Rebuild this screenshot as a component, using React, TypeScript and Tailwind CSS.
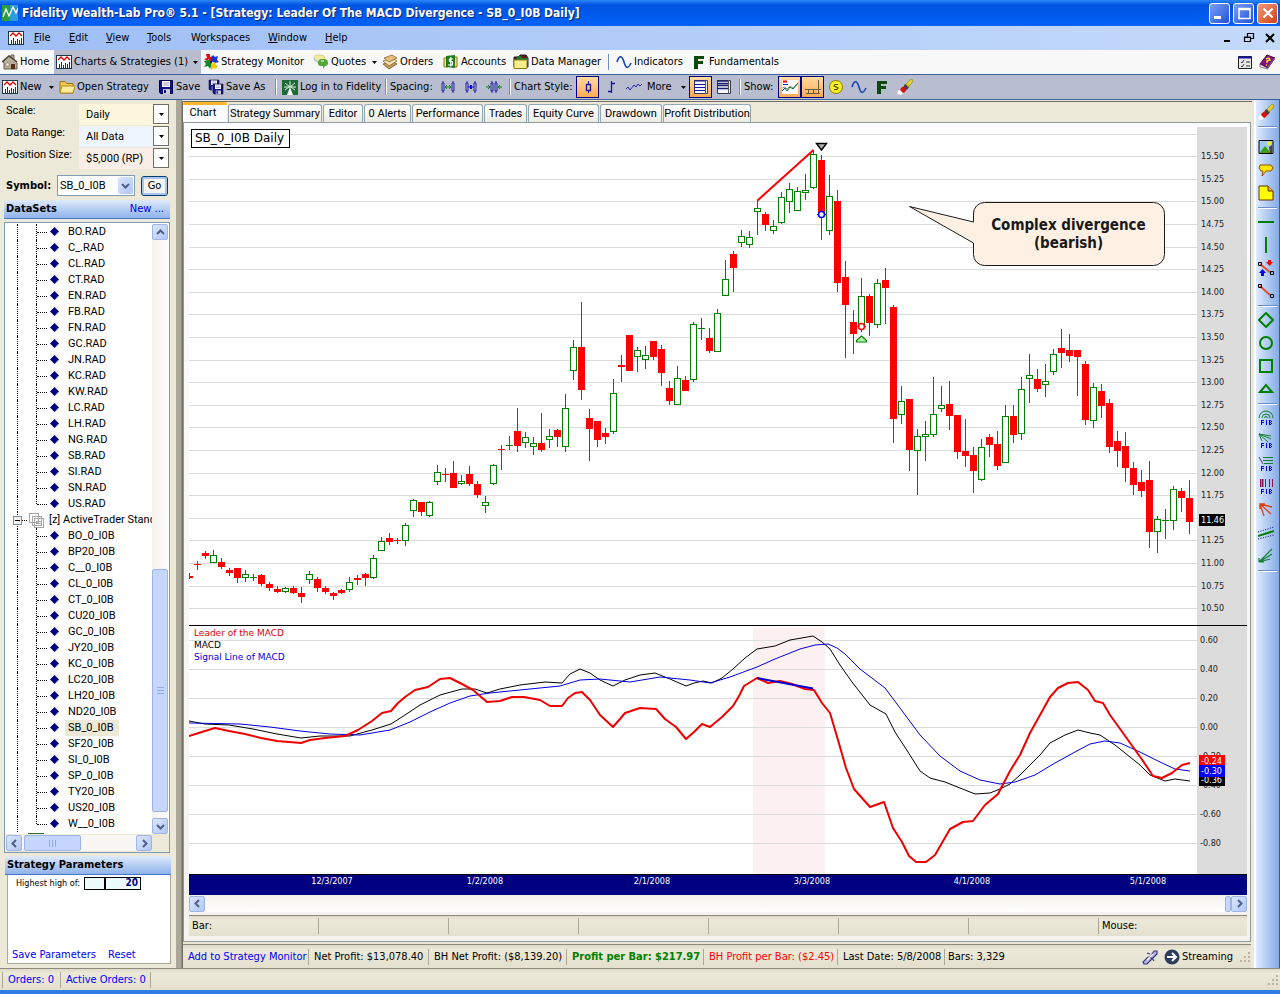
import type { ReactNode } from "react";

type Candle = [up: 0 | 1, high: number, top: number, bottom: number, low: number];

const FIRST_X = 189;
const STEP = 8;

const candles: Candle[] = [
  [0, 573, 576, 578, 579], [0, 561, 564, 565, 570], [0, 551, 553, 556, 559], [1, 550, 555, 563, 563],
  [0, 558, 562, 567, 569], [0, 568, 570, 573, 576], [0, 568, 568, 578, 583], [1, 570, 574, 578, 582],
  [1, 574, 577, 578, 581], [0, 574, 575, 584, 586], [0, 582, 584, 588, 591], [0, 586, 589, 592, 593],
  [1, 587, 588, 592, 593], [0, 586, 588, 593, 594], [0, 587, 593, 597, 603], [1, 571, 574, 580, 584],
  [0, 577, 579, 588, 592], [0, 586, 588, 592, 594], [0, 592, 593, 596, 600], [0, 589, 590, 593, 594],
  [1, 577, 582, 590, 592], [0, 575, 578, 580, 585], [0, 573, 574, 578, 586], [1, 555, 558, 578, 579],
  [1, 537, 541, 551, 551], [0, 533, 538, 542, 545], [0, 538, 540, 541, 544], [1, 523, 525, 541, 546],
  [1, 499, 500, 511, 517], [0, 502, 502, 512, 516], [1, 501, 502, 516, 517], [1, 465, 472, 482, 485],
  [0, 468, 474, 475, 482], [0, 461, 473, 488, 488], [1, 475, 481, 484, 485], [0, 466, 474, 484, 486],
  [0, 481, 484, 495, 498], [1, 496, 502, 506, 513], [1, 464, 465, 484, 485], [0, 445, 449, 450, 470],
  [1, 436, 445, 446, 450], [0, 408, 431, 446, 452], [1, 432, 437, 443, 448], [1, 437, 443, 447, 455],
  [0, 413, 443, 450, 452], [1, 429, 436, 440, 448], [0, 429, 430, 437, 447], [1, 394, 408, 447, 452],
  [1, 340, 347, 371, 380], [0, 302, 347, 390, 400], [0, 409, 418, 429, 461], [0, 421, 421, 440, 447],
  [0, 428, 433, 437, 444], [1, 379, 393, 432, 434], [0, 355, 365, 367, 382], [0, 335, 335, 371, 371],
  [1, 347, 350, 357, 372], [1, 346, 355, 360, 369], [0, 341, 341, 357, 360], [0, 345, 349, 373, 386],
  [0, 381, 388, 401, 405], [1, 366, 378, 405, 405], [0, 376, 380, 391, 391], [1, 322, 324, 380, 382],
  [1, 318, 328, 329, 340], [0, 328, 338, 351, 353], [1, 309, 313, 352, 352], [1, 260, 279, 296, 296],
  [0, 251, 254, 268, 292], [1, 230, 236, 243, 247], [1, 231, 237, 245, 248], [1, 200, 208, 212, 235],
  [0, 212, 214, 225, 231], [1, 220, 226, 231, 234], [1, 192, 197, 223, 224], [1, 183, 189, 202, 213],
  [1, 187, 191, 211, 211], [1, 174, 190, 193, 200], [1, 150, 154, 188, 189], [0, 155, 160, 213, 240],
  [1, 175, 196, 231, 235], [0, 190, 201, 283, 292], [0, 261, 277, 305, 358], [0, 310, 322, 334, 354],
  [1, 278, 296, 325, 332], [0, 294, 296, 323, 336], [1, 279, 283, 325, 328], [0, 268, 280, 288, 324],
  [0, 305, 307, 419, 443], [1, 386, 401, 415, 424], [0, 399, 399, 450, 471], [1, 429, 436, 451, 495],
  [1, 421, 434, 437, 461], [1, 377, 414, 435, 437], [1, 386, 405, 409, 412], [0, 381, 404, 416, 430],
  [0, 415, 415, 452, 459], [0, 419, 451, 456, 467], [0, 447, 455, 471, 493], [1, 439, 447, 480, 481],
  [0, 434, 437, 445, 457], [0, 431, 444, 466, 470], [1, 405, 416, 463, 463], [0, 405, 416, 435, 443],
  [1, 377, 389, 434, 440], [1, 354, 375, 379, 403], [0, 369, 379, 389, 392], [1, 364, 381, 385, 397],
  [1, 349, 354, 372, 375], [0, 329, 348, 353, 368], [0, 334, 350, 356, 362], [0, 350, 350, 357, 396],
  [0, 361, 364, 420, 425], [1, 383, 387, 421, 428], [0, 384, 391, 406, 418], [0, 399, 403, 447, 453],
  [0, 431, 441, 451, 467], [0, 432, 446, 468, 482], [0, 462, 468, 485, 495], [0, 470, 482, 491, 497],
  [0, 461, 480, 532, 548], [1, 516, 519, 532, 553], [1, 509, 520, 521, 539], [1, 486, 489, 521, 530],
  [0, 488, 491, 498, 512], [0, 480, 498, 522, 534],
];

const leaderLine =
  "189,736 205,731 215,728 229,731 245,734 261,738 277,741 301,743 310,740 325,738 345,736 358,730 372,721 382,713 391,711 398,703 405,697 415,690 428,687 440,679 450,678 462,684 473,690 487,702 500,701 512,697 524,697 540,700 550,706 562,706 568,698 575,693 582,692 590,700 600,715 613,727 620,719 625,713 640,708 656,709 665,719 676,727 686,739 694,732 702,724 710,727 722,717 733,706 739,696 744,686 757,678 768,683 780,681 792,684 805,689 814,690 822,703 830,713 838,740 846,768 854,789 870,807 884,802 893,828 902,842 909,856 916,862 926,862 935,855 950,829 963,822 973,821 985,805 998,794 1010,771 1020,755 1030,733 1040,715 1050,697 1058,688 1068,683 1078,682 1088,690 1095,701 1103,703 1110,715 1123,733 1133,747 1143,761 1153,776 1162,778 1172,773 1182,765 1190,763";
const macdLine =
  "189,721 205,724 229,725 253,729 277,734 301,738 320,736 350,736 372,730 391,724 405,715 420,705 440,695 462,689 475,689 487,693 500,689 520,685 545,682 562,683 570,674 580,669 590,673 600,680 613,686 625,680 640,675 655,673 670,679 686,686 694,683 703,681 712,683 722,678 733,669 745,658 757,649 775,646 790,640 813,636 822,642 830,649 840,665 852,682 870,705 886,714 895,732 908,752 920,771 930,778 945,782 960,788 975,794 990,793 1000,789 1010,784 1020,775 1040,755 1050,743 1065,735 1078,730 1090,733 1100,735 1115,745 1125,753 1140,765 1150,775 1165,781 1175,779 1190,781";
const signalLine =
  "189,723 240,724 270,727 300,731 330,734 360,735 390,730 410,722 430,712 450,703 470,696 490,693 520,690 560,686 580,680 600,679 630,682 660,677 690,680 710,683 730,677 757,667 775,659 800,649 815,645 828,644 837,648 845,654 860,669 885,688 900,708 920,735 940,756 960,771 980,780 1000,784 1015,782 1035,775 1055,763 1075,752 1090,744 1105,741 1120,743 1140,752 1160,762 1175,769 1190,771";

const priceRows = Array.from({ length: 22 }, (_, k) => ({
  y: Math.round(133.5 + 22.6 * k),
  label: (15.75 - 0.25 * k).toFixed(2),
}));
const macdRows = Array.from({ length: 8 }, (_, k) => ({
  y: 640 + 29 * k,
  label: (0.6 - 0.2 * k).toFixed(2).replace("-0.00", "0.00"),
}));
const dates: [number, string][] = [
  [332, "12/3/2007"], [485, "1/2/2008"], [652, "2/1/2008"], [812, "3/3/2008"], [972, "4/1/2008"], [1148, "5/1/2008"],
];

/* ---------- small drawings ---------- */

function Icon({ children, className = "size-4" }: { children: ReactNode; className?: string }) {
  return (
    <svg viewBox="0 0 16 16" className={`shrink-0 ${className}`} fill="none" aria-hidden="true">
      {children}
    </svg>
  );
}

const ChartIcon = () => (
  <Icon>
    <rect x=".5" y="1.5" width="15" height="13" fill="#fff" stroke="#1a3a4a" />
    <path d="M2 6l3-3 3 3 3-3 3 3" stroke="#e00000" strokeWidth="1.4" />
    <path d="M3.500 14V10M5.500 14V8M7.500 14v-3M9.500 14V9M11.500 14v-4M13.500 14V8" stroke="#0d3b4a" shapeRendering="crispEdges" />
  </Icon>
);
const HomeIcon = () => (
  <Icon>
    <path d="M1 8l6-6 2 1V1h3v5l3 3v6H2V9z" fill="#b8ae98" stroke="#6b604c" />
    <path d="M0 8l7-6 8 6" stroke="#4f4637" strokeWidth="1.500" />
    <path d="M9 15v-5h4v5z" fill="#5b2d18" />
    <path d="M4 9h3v3H4z" fill="#f5f1e4" stroke="#786b52" strokeWidth=".5" />
  </Icon>
);
const PuzzleIcon = () => (
  <Icon>
    <path d="M3 0h4v3l3-1v5H6V5L4 7 1 5l3-1z" fill="#e01010" />
    <path d="M8 4l2-3 2 2 3-1-1 4 2 2-4 1-4-2z" fill="#1030d0" />
    <path d="M1 7l5-1 3 4-2 5-2-3-4 1 2-3z" fill="#0c8a2a" />
    <path d="M8 10l4-2 1 3 2 1-2 3-2-1-3 2z" fill="#f4c800" />
    <circle cx="8" cy="8" r="1.200" fill="#222" />
  </Icon>
);
const QuotesIcon = () => (
  <Icon>
    <path d="M5 1h3a4 4 0 014 4v1a3 3 0 01-3 3H6L2 7a3 3 0 01-1-3 3 3 0 014-3z" fill="#f3e9a0" stroke="#c8b45c" strokeWidth=".5" />
    <path d="M1 4l5 4v2L1 6z" fill="#a9cdf0" />
    <path d="M9 5h2a4 4 0 014 4 3 3 0 01-3 3l-2 3v-3H8a3 3 0 01-3-3 4 4 0 014-4z" fill="#54a63c" />
    <path d="M8 7h3" stroke="#bfe6a8" strokeWidth="1.500" />
  </Icon>
);
const OrdersIcon = () => (
  <Icon>
    <path d="M1 10l9-3 5 3-8 5z" fill="#c69a55" stroke="#6f4a1c" strokeWidth=".7" />
    <path d="M1 7l9-3 5 3-8 5z" fill="#f2e3bb" stroke="#7c5623" strokeWidth=".7" />
    <path d="M2 4l8-3 5 3-8 4z" fill="#e5c078" stroke="#7c5623" strokeWidth=".7" />
  </Icon>
);
const AccountsIcon = () => (
  <Icon>
    <path d="M1 4h4v9H1zM10 3h4v10h-4z" fill="#f2e36a" stroke="#8d7a12" />
    <path d="M3 2l9-1v13l-9-1z" fill="#1e7a1e" />
    <path d="M10 5H6.500v2.500h3V11H5M7.800 3v9.500" stroke="#fff" strokeWidth="1.200" />
  </Icon>
);
const DataIcon = () => (
  <Icon>
    <path d="M1 3h5l1-2h6l2 3v9H1z" fill="#6b1515" stroke="#222" />
    <path d="M4 2h4l1 2h6v3H3z" fill="#1c7a36" />
    <path d="M1 6h13v8.500H1z" fill="#f8ee8a" stroke="#8c7c1c" />
  </Icon>
);
const WaveIcon = () => (
  <Icon>
    <path d="M1 8C3 1 6 1 8 8s4 7 7 1" stroke="#1546b8" strokeWidth="1.600" />
  </Icon>
);
const FIcon = () => (
  <Icon>
    <path d="M3 2h10v3H7v2h5v3H7v5H3z" fill="#0c4a0c" />
  </Icon>
);
const EraserIcon = () => (
  <Icon>
    <path d="M0 15l1-3 3-2 3 3-3 3z" fill="#fff" />
    <path d="M4 9l3-2 3 3-2 3-2 1-3-3z" fill="#d41414" />
    <path d="M7 6l2-1 3 3-2 3-3-3z" fill="#4a4438" />
    <path d="M9 5l5-5 2 1-1 3-4 4z" fill="#e3d024" stroke="#84700c" strokeWidth=".5" />
  </Icon>
);
const FolderIcon = () => (
  <Icon>
    <path d="M1 14V2.500h5l1.500 2H14V14z" fill="#f0c94e" stroke="#9d7417" />
    <path d="M1 14l2-7h13l-2 7z" fill="#fdeb9b" stroke="#b48a22" />
  </Icon>
);
const Disk = () => (
  <>
    <path d="M1.500 1.500h13v13h-12l-1-1z" fill="#10108a" stroke="#000040" />
    <path d="M4 2h8v6H4z" fill="#fff" />
    <path d="M5 4h6M5 6h6" stroke="#9a9ac0" />
    <path d="M5 10h7v5H5z" fill="#c9ccd8" />
    <path d="M6 11h2v3H6z" fill="#10108a" />
  </>
);
const SaveIcon = () => (
  <Icon>
    <Disk />
  </Icon>
);
const SaveAsIcon = () => (
  <Icon>
    <g transform="scale(.75)">
      <Disk />
    </g>
    <g transform="translate(4 4) scale(.75)">
      <Disk />
    </g>
  </Icon>
);
const LoginIcon = () => (
  <Icon>
    <path d="M0 1h16v15H0z" fill="#1c6a38" />
    <path d="M8 8l3 8H5z" fill="#fff" />
    <path d="M8 8L3 4M8 8l5-4M8 8V2M8 8L2 8M8 8h6M7 8L3 11M9 8l4 3" stroke="#dff2e0" />
  </Icon>
);
const Spacing = ({ kind }: { kind: 0 | 1 | 2 }) => (
  <Icon>
    <g stroke="#2323a0">
      <path d={kind === 0 ? "M3 2v12M13 2v12" : kind === 1 ? "M4 2v12M12 2v12" : "M6 2v12M10 2v12"} />
      <path
        d={
          kind === 0
            ? "M2 4h2v8H2zM12 4h2v8h-2z"
            : kind === 1
              ? "M3 4h2v8H3zM11 4h2v8h-2z"
              : "M5 4h2v8H5zM9 4h2v8H9z"
        }
        fill="#b8bed0"
      />
    </g>
    {kind === 0 && <path d="M5 8h6M7 6L5 8l2 2M9 6l2 2-2 2" stroke="#0a7a1a" />}
    {kind === 1 && <path d="M5 8h6M7 6l2 2-2 2M9 6L7 8l2 2" stroke="#0000ff" />}
    {kind === 2 && <path d="M0 8h4M2 6l2 2-2 2M16 8h-4M14 6l-2 2 2 2" stroke="#0a7a1a" />}
  </Icon>
);
const CandleIcon = () => (
  <Icon>
    <path d="M8.500 2v3M8.500 11v3" stroke="#1414a0" />
    <path d="M6.500 5.500h4v6h-4z" stroke="#1414a0" strokeWidth="1.300" />
  </Icon>
);
const BarIcon = () => (
  <Icon>
    <path d="M8.500 2v12M8 4.500h4M5 12.500h4" stroke="#1414a0" strokeWidth="1.300" />
  </Icon>
);
const LineIcon = () => (
  <Icon>
    <path d="M0 10l2-2 2 3 4-5 2 2 2-3 2 2 2-2" stroke="#2323b0" />
  </Icon>
);
const GridIcon = ({ thick }: { thick?: boolean }) => (
  <Icon>
    <path d="M1.500 1.500h13v13h-13z" fill="#f4f4fa" stroke="#3a3a50" />
    {thick ? (
      <path d="M1 2h12M1 4.500h12M1 6.500h12M1 9.500h12" stroke="#1c1c70" strokeWidth="1.400" />
    ) : (
      <path d="M1 2h11M1 5.500h11M1 8.500h11M1 11.500h11" stroke="#1414a0" />
    )}
    <path d="M12.500 1v14" stroke="#555" />
  </Icon>
);
const ShowLinesIcon = () => (
  <Icon>
    <path d="M0 1h16v14H0z" fill="#fff" />
    <path d="M1 2.500h4" stroke="#e00" strokeWidth="2" />
    <path d="M1 5.500h5" stroke="#22c" />
    <path d="M0 9l3-1 2 2 3-3 3 2 5-5" stroke="#999" />
    <path d="M0 12l3-3 2 3 3-4 3 2 5-6" stroke="#063" />
  </Icon>
);
const ShowAxisIcon = () => (
  <Icon>
    <path d="M0 10.500h16M13.500 1v10M1 14.500h14M3.500 11v4M8.500 11v4M13.500 11v4" stroke="#6b5a40" />
  </Icon>
);
const CoinIcon = () => (
  <Icon>
    <circle cx="8" cy="8" r="6.500" fill="#f8f020" stroke="#8a7c00" />
    <path d="M10 5.500H7L6 7l4 2-1 1.500H6" stroke="#5a5000" strokeWidth="1.200" />
  </Icon>
);
const Arrow = () => (
  <svg viewBox="0 0 5 3" className="h-[3px] w-[5px] shrink-0" aria-hidden="true">
    <path d="M0 0h5L2.500 3z" fill="#000" />
  </svg>
);
const Chevron = ({ dir }: { dir: "up" | "down" | "left" | "right" }) => {
  const d = {
    up: "M1 6l3.500-3.500L8 6",
    down: "M1 3l3.500 3.500L8 3",
    left: "M6 1L2.500 4.500 6 8",
    right: "M3 1l3.500 3.500L3 8",
  }[dir];
  return (
    <svg viewBox="0 0 9 9" className="size-[9px]" fill="none" aria-hidden="true">
      <path d={d} stroke="#4d6185" strokeWidth="2" />
    </svg>
  );
};
const Grip = () => (
  <svg viewBox="0 0 12 12" className="size-3 shrink-0" aria-hidden="true">
    <path d="M9 1h2v2H9zM9 5h2v2H9zM5 5h2v2H5zM9 9h2v2H9zM5 9h2v2H5zM1 9h2v2H1z" fill="#b8b4a2" />
  </svg>
);

function ScrollButton({ dir, label }: { dir: "up" | "down" | "left" | "right"; label: string }) {
  return (
    <button
      aria-label={label}
      className="flex size-4 shrink-0 items-center justify-center rounded-[2px] border border-[#9db5e8] bg-linear-to-br from-[#dbe6fe] to-[#b4c8f6]"
    >
      <Chevron dir={dir} />
    </button>
  );
}

/* ---------- bars ---------- */

function Tool({ width, icon, label, arrow, active }: {
  width: string;
  icon?: ReactNode;
  label?: string;
  arrow?: boolean;
  active?: boolean;
}) {
  return (
    <button
      aria-label={label ?? "Tool"}
      className={`flex h-full shrink-0 items-center gap-[2px] whitespace-nowrap pl-[2px] ${width} ${active ? "bg-[#b8bed0]" : ""}`}
    >
      {icon}
      {label && <span>{label}</span>}
      {arrow && <span className="ml-auto pr-[3px]"><Arrow /></span>}
    </button>
  );
}

function IconTool({ width, icon, on, name }: { width: string; icon: ReactNode; on?: boolean; name: string }) {
  return (
    <button
      aria-label={name}
      className={`flex h-[22px] shrink-0 items-center justify-center ${width} ${
        on ? "border border-[#000080] bg-linear-to-b from-[#ffd9a0] to-[#fdab54]" : ""
      }`}
    >
      {icon}
    </button>
  );
}

const Divider = ({ className = "mx-1" }: { className?: string }) => (
  <span className={`h-4 w-[2px] shrink-0 border-l border-[#6a8ccb] bg-white ${className}`} />
);

function TitleBar() {
  return (
    <header className="flex h-[26px] items-center gap-[3px] bg-linear-to-b from-[#2a86f8] via-[#0053e1] via-20% to-[#0062fa] pl-[2px] pr-[2px]">
      <svg viewBox="0 0 16 16" className="size-4" fill="none" aria-hidden="true">
        <path d="M0 0h10v16H0z" fill="#2c9c3c" />
        <path d="M8 0h8v16H8z" fill="#2a9ed8" />
        <path d="M1 12l3-8 3 7 4-9 3 6 2-5" stroke="#fff" strokeWidth="1.300" />
      </svg>
      <h1 className="grow whitespace-nowrap pl-px text-[12px] font-bold text-white [text-shadow:1px_1px_0_#0a246a]">
        Fidelity Wealth-Lab Pro® 5.1 - [Strategy: Leader Of The MACD Divergence - SB_0_I0B Daily]
      </h1>
      <button aria-label="Minimize" className="flex size-[21px] items-center justify-center rounded-[3px] border border-white bg-linear-to-br from-[#7d9ff4] to-[#1e4fd8]">
        <Icon><path d="M2 11h7v3H2z" fill="#fff" /></Icon>
      </button>
      <button aria-label="Maximize" className="flex size-[21px] items-center justify-center rounded-[3px] border border-white bg-linear-to-br from-[#7d9ff4] to-[#1e4fd8]">
        <Icon><path d="M3 3.500h11v10H3zM3 4.500h11" stroke="#fff" strokeWidth="1.500" /></Icon>
      </button>
      <button aria-label="Close" className="flex size-[21px] items-center justify-center rounded-[3px] border border-white bg-linear-to-br from-[#f09a7c] to-[#d03a10]">
        <Icon><path d="M3.500 3.500l9 9M12.500 3.500l-9 9" stroke="#fff" strokeWidth="2.200" /></Icon>
      </button>
    </header>
  );
}

const menus: [string, string, string, string][] = [
  ["", "F", "ile", "w-[35px]"], ["", "E", "dit", "w-[37px]"], ["", "V", "iew", "w-[41px]"], ["", "T", "ools", "w-11"],
  ["W", "o", "rkspaces", "w-[77px]"], ["", "W", "indow", "w-[57px]"], ["", "H", "elp", "w-10"],
];

function MenuBar() {
  return (
    <nav className="flex h-6 items-center bg-linear-to-r from-[#9ebef5] to-[#c4dafa] pl-2">
      <span className="mr-[10px]"><ChartIcon /></span>
      {menus.map(([a, key, b, width]) => (
        <button key={key + b} className={`text-left ${width}`}>
          {a}<span className="underline">{key}</span>{b}
        </button>
      ))}
      <div className="ml-auto flex items-center gap-[5px] pr-[2px]">
        <button aria-label="Minimize document"><Icon><path d="M4 10h6v2H4z" fill="#000" /></Icon></button>
        <button aria-label="Restore document">
          <Icon><path d="M3.500 7.500h6v4h-6zM3 7h7M6.500 7V3.500h6v5H10M6 3.500h7" stroke="#000" strokeWidth="1.200" /></Icon>
        </button>
        <button aria-label="Close document"><Icon><path d="M4 4l8 8M12 4l-8 8" stroke="#000" strokeWidth="2" /></Icon></button>
      </div>
    </nav>
  );
}

function MainToolbar() {
  return (
    <div className="flex h-[25px] items-center border-b border-[#3b619c] bg-[#f8f8f8]">
      <Tool width="w-[54px]" icon={<HomeIcon />} label="Home" />
      <Tool width="w-[147px]" icon={<ChartIcon />} label="Charts & Strategies (1)" arrow active />
      <Tool width="w-[110px]" icon={<PuzzleIcon />} label="Strategy Monitor" />
      <Tool width="w-[69px]" icon={<QuotesIcon />} label="Quotes" arrow />
      <Tool width="w-[61px]" icon={<OrdersIcon />} label="Orders" />
      <Tool width="w-[70px]" icon={<AccountsIcon />} label="Accounts" />
      <Tool width="w-[93px]" icon={<DataIcon />} label="Data Manager" />
      <Divider />
      <Tool width="w-[75px]" icon={<WaveIcon />} label="Indicators" />
      <Tool width="w-24" icon={<FIcon />} label="Fundamentals" />
      <div className="ml-auto flex gap-[6px] pr-[5px]">
        <button aria-label="Preferences">
          <Icon>
            <path d="M1.500 2.500h13v12h-13z" fill="#e8e8e8" stroke="#222" />
            <path d="M1 3.500h14" stroke="#1414a0" strokeWidth="2" />
            <path d="M4 8l1 1 2-3M4 12l1 1 2-3M9 8h4M9 12h4" stroke="#333" />
          </Icon>
        </button>
        <button aria-label="Help">
          <Icon>
            <path d="M1 10L8 1l8 3-7 10z" fill="#8a108a" stroke="#4a084a" />
            <path d="M1 10v3l8 2v-2l7-9" stroke="#777" />
            <path d="M7 5l3-1 1 2-3 1v2M7 11h1" stroke="#f5e020" strokeWidth="1.400" />
          </Icon>
        </button>
      </div>
    </div>
  );
}

function ChartToolbar() {
  return (
    <div className="flex h-[25px] items-center border-b border-[#3b619c] bg-[#b8bed0]">
      <Tool width="w-[57px]" icon={<ChartIcon />} label="New" arrow />
      <Tool width="w-[99px]" icon={<FolderIcon />} label="Open Strategy" />
      <Tool width="w-[50px]" icon={<SaveIcon />} label="Save" />
      <Tool width="w-[66px]" icon={<SaveAsIcon />} label="Save As" />
      <Divider className="mx-[3px]" />
      <Tool width="w-[102px]" icon={<LoginIcon />} label="Log in to Fidelity" />
      <Divider className="mx-[3px]" />
      <span className="w-[46px] whitespace-nowrap">Spacing:</span>
      <IconTool width="w-[23px]" name="Wider spacing" icon={<Spacing kind={0} />} />
      <IconTool width="w-[23px]" name="Tighter spacing" icon={<Spacing kind={1} />} />
      <IconTool width="w-[23px]" name="Fit spacing" icon={<Spacing kind={2} />} />
      <Divider className="mr-[3px] ml-1" />
      <span className="w-[62px] whitespace-nowrap">Chart Style:</span>
      <IconTool width="w-[23px]" name="Candlestick" on icon={<CandleIcon />} />
      <IconTool width="w-[23px]" name="Bar" icon={<BarIcon />} />
      <IconTool width="w-[23px]" name="Line" icon={<LineIcon />} />
      <Tool width="w-11" label="More" arrow />
      <IconTool width="w-[23px]" name="Linear scale" on icon={<GridIcon />} />
      <IconTool width="w-[23px]" name="Log scale" icon={<GridIcon thick />} />
      <Divider className="mr-[3px] ml-1" />
      <span className="w-[34px] whitespace-nowrap">Show:</span>
      <IconTool width="w-[23px]" name="Show indicators" on icon={<ShowLinesIcon />} />
      <IconTool width="w-[23px]" name="Show axis" on icon={<ShowAxisIcon />} />
      <IconTool width="w-[23px]" name="Show trades" icon={<CoinIcon />} />
      <IconTool width="w-[23px]" name="Show waves" icon={<WaveIcon />} />
      <IconTool width="w-[23px]" name="Show fundamentals" icon={<FIcon />} />
      <IconTool width="w-[23px]" name="Clear drawings" icon={<EraserIcon />} />
    </div>
  );
}

/* ---------- sidebar ---------- */

function Option({ id, label, value, fill }: { id: string; label: string; value: string; fill: string }) {
  return (
    <div className="flex h-[22px] pl-[6px] pr-[7px]">
      <label htmlFor={id} className="w-[73px] shrink-0 whitespace-nowrap">{label}</label>
      <div className="relative h-[21px] min-w-0 grow">
        <select id={id} className={`h-full w-full appearance-none pl-[7px] pr-4 ${fill}`} defaultValue={value}>
          <option>{value}</option>
        </select>
        <span className="pointer-events-none absolute top-0 right-0 flex h-5 w-4 items-center justify-center border border-[#716f64] bg-white">
          <Arrow />
        </span>
      </div>
    </div>
  );
}

const radSymbols = "BO C_ CL CT EN FB FN GC JN KC KW LC LH NG SB SI SN US".split(" ").map((s) => `${s}.RAD`);
const iobSymbols = "BO_0 BP20 C__0 CL_0 CT_0 CU20 GC_0 JY20 KC_0 LC20 LH20 ND20 SB_0 SF20 SI_0 SP_0 TY20 US20 W__0"
  .split(" ")
  .map((s) => `${s}_I0B`);

function Leaf({ name, last, selected }: { name: string; last?: boolean; selected?: boolean }) {
  return (
    <li className="flex h-4 items-start">
      <span className="h-4 w-[13px] border-r border-dotted border-black" />
      <span className={`w-[19px] border-r border-dotted border-black ${last ? "h-2" : "h-4"}`} />
      <span className="mt-2 w-[10px] border-t border-dotted border-black" />
      <svg viewBox="0 0 9 9" className="mt-[3px] ml-[3px] size-[9px]" aria-hidden="true">
        <path d="M4.500 0L9 4.500 4.500 9 0 4.500z" fill="#000080" />
      </svg>
      <span className={`ml-[6px] h-4 pr-[5px] pl-[3px] leading-4 whitespace-nowrap ${selected ? "bg-[#ece9d8]" : ""}`}>{name}</span>
    </li>
  );
}

const headBar =
  "flex items-center justify-between border-b border-[#4a78c8] bg-linear-to-b from-[#dfeafb] to-[#8fb3ea] font-bold";

function Sidebar() {
  return (
    <aside className="flex w-[176px] shrink-0 flex-col font-[Roboto,sans-serif]">
      <div className="pt-1">
        <Option id="scale" label="Scale:" value="Daily" fill="bg-[#fef6dc]" />
        <Option id="range" label="Data Range:" value="All Data" fill="bg-[#eef5fe]" />
        <Option id="size" label="Position Size:" value="$5,000 (RP)" fill="bg-[#faeee8]" />
      </div>
      <div className="mt-[5px] flex h-[21px] items-center pl-[6px] font-['DejaVu_Sans_Condensed','DejaVu_Sans',sans-serif]">
        <label htmlFor="symbol" className="w-[51px] font-bold">Symbol:</label>
        <div className="relative h-[21px] w-[78px]">
          <select id="symbol" defaultValue="SB_0_I0B" className="h-full w-full appearance-none border border-[#7f9db9] bg-white pl-[2px] font-[Roboto,sans-serif]">
            <option>SB_0_I0B</option>
          </select>
          <span className="pointer-events-none absolute top-[2px] right-[2px] flex h-[17px] w-[15px] items-center justify-center rounded-[2px] bg-linear-to-br from-[#dbe6fe] to-[#b0c5f5]">
            <Chevron dir="down" />
          </span>
        </div>
        <button className="ml-[6px] h-5 w-[27px] rounded-[3px] border border-[#003c74] bg-[#f4f4f0] shadow-[inset_0_0_0_2px_#a6c5f2]">Go</button>
      </div>
      <div className={`mt-1 mr-[6px] ml-1 h-[19px] rounded-t-[2px] pr-[6px] pl-[2px] font-['DejaVu_Sans_Condensed','DejaVu_Sans',sans-serif] ${headBar}`}>
        <h2>DataSets</h2>
        <a href="#new" className="font-normal text-[#0000ff]">New ...</a>
      </div>

      <div className="mt-[3px] mr-[6px] ml-1 border border-[#7f9db9] bg-white pt-px">
        <div className="flex">
          <ul className="min-w-0 grow overflow-hidden">
            {radSymbols.map((s, i) => <Leaf key={s} name={s} last={i === radSymbols.length - 1} />)}
            <li className="flex h-4 items-center whitespace-nowrap">
              <svg viewBox="0 0 40 16" className="h-4 w-10 shrink-0" fill="none" aria-hidden="true" shapeRendering="crispEdges">
                <path d="M12.500 0v16" stroke="#000" strokeDasharray="1 1" />
                <path d="M17 8.500h6" stroke="#000" strokeDasharray="1 1" />
                <path d="M8.500 4.500h8v8h-8z" fill="#f4f2ea" stroke="#7b8ea8" />
                <path d="M10 8.500h5" stroke="#000" />
                <path d="M24.500 1.500h9v9h-9zM27.500 4.500h9v9h-9zM29.500 6.500h9v9h-9z" fill="#fff" stroke="#a8a8a8" />
                <path d="M31 9.500h6M31 11.500h6M31 13.500h6" stroke="#a8a8a8" />
              </svg>
              <span className="ml-1">[z] ActiveTrader Standard</span>
            </li>
            {iobSymbols.map((s, i) => (
              <Leaf key={s} name={s} last={i === iobSymbols.length - 1} selected={s === "SB_0_I0B"} />
            ))}
            <li className="ml-[23px] h-[2px] w-4 border-b border-[#2c6a2c]" />
          </ul>
          <div className="flex w-[17px] shrink-0 flex-col bg-linear-to-r from-[#f3f1ec] to-[#fefefb]">
            <ScrollButton dir="up" label="Scroll up" />
            <div className="min-h-[329px]" />
            <div className="flex min-h-[243px] w-4 items-center justify-center rounded-[2px] border border-[#9db5e8] bg-[#c6d6fc]">
              <span className="h-[7px] w-[7px] border-y border-[#8eabe8] shadow-[inset_0_2px_#c6d6fc,inset_0_3px_#8eabe8]" />
            </div>
            <div className="grow" />
            <ScrollButton dir="down" label="Scroll down" />
          </div>
        </div>
        <div className="flex h-[18px] items-center bg-[#ece9d8]">
          <div className="flex w-[147px] items-center bg-[#f8f7f3] pl-px">
            <ScrollButton dir="left" label="Scroll left" />
            <div className="ml-[2px] flex h-4 w-[57px] items-center justify-center rounded-[2px] border border-[#9db5e8] bg-[#c6d6fc]">
              <span className="h-[7px] w-[7px] border-x border-[#8eabe8] shadow-[inset_2px_0_#c6d6fc,inset_3px_0_#8eabe8]" />
            </div>
            <span className="ml-auto"><ScrollButton dir="right" label="Scroll right" /></span>
          </div>
        </div>
      </div>

      <div className={`mt-[3px] mr-[5px] ml-[5px] h-[19px] rounded-t-[2px] pl-[2px] font-['DejaVu_Sans_Condensed','DejaVu_Sans',sans-serif] ${headBar}`}>
        <h2>Strategy Parameters</h2>
      </div>
      <div className="mr-[5px] mb-1 ml-[7px] flex grow flex-col border border-t-0 border-[#aca899] bg-white font-['DejaVu_Sans_Condensed','DejaVu_Sans',sans-serif]">
        <div className="flex items-center pt-px pl-2">
          <label htmlFor="hh" className="w-[68px] text-[9px] whitespace-nowrap">Highest high of:</label>
          <span className="h-[13px] w-[21px] border border-black bg-[#ecfcfc]" />
          <input id="hh" defaultValue="20" className="h-[13px] w-[36px] border border-black bg-[#ecfcfc] pr-[2px] text-right text-[10px] font-bold text-[#000080]" />
        </div>
        <div className="mt-auto flex gap-3 pb-[1px] pl-1 whitespace-nowrap text-[#0000ff]">
          <a href="#save">Save Parameters</a>
          <a href="#reset">Reset</a>
        </div>
      </div>
    </aside>
  );
}

/* ---------- chart ---------- */

function PriceTag({ y, label, fill }: { y: number; label: string; fill: string }) {
  return (
    <>
      <rect x="1199" y={y - 6} width="26" height="12" fill={fill} />
      <text x="1201" y={y + 3} fill="#fff">{label}</text>
    </>
  );
}

function Chart() {
  return (
    <svg
      viewBox="189 127 1058 768"
      className="block w-full font-['DejaVu_Sans_Condensed','DejaVu_Sans',sans-serif] text-[9px]"
      fill="none"
      role="img"
      aria-label="Daily price chart with MACD"
    >
      <rect x="189" y="127" width="1058" height="768" fill="#fff" />
      <g shapeRendering="crispEdges">
        <rect x="753" y="627" width="72" height="248" fill="#fdf0f0" />
        {[...priceRows, ...macdRows].map((r) => (
          <path key={r.y} d={`M189 ${r.y + 0.5}H1197`} stroke="#dcdcdc" />
        ))}
        <rect x="1197" y="127" width="50" height="748" fill="#dcdcdc" />
        {candles.map(([up, high, top, bottom, low], i) => {
          const x = FIRST_X + i * STEP;
          const color = up ? "#008000" : "#ff0000";
          return (
            <g key={i} fill={color}>
              <rect x={x} y={high} width="1" height={low - high} />
              <rect x={x - 3} y={top} width="7" height={bottom - top} />
              {up && bottom - top > 2 ? <rect x={x - 2} y={top + 1} width="5" height={bottom - top - 2} fill="#fff" /> : null}
            </g>
          );
        })}
        <path d="M189 625.500H1247M189 874.500H1247" stroke="#000" />
        <rect x="189" y="875" width="1058" height="20" fill="#000080" />
      </g>

      <path d="M757.500 200.500L813.500 150" stroke="#ff0000" strokeWidth="2" />
      <path d="M816.500 143.500h10l-5 6.500z" fill="#b0b0b0" stroke="#000" strokeWidth="1.400" />
      <circle cx="821.500" cy="214.500" r="3" fill="#fff" stroke="#0000ff" strokeWidth="1.600" />
      <path d="M817 214.500h2M824 214.500h2" stroke="#0000ff" />
      <circle cx="861.500" cy="326.500" r="3" fill="#fff" stroke="#ff0000" strokeWidth="1.600" />
      <path d="M857 326.500h2M864 326.500h2" stroke="#ff0000" />
      <path d="M856.500 342h10v-1.500l-5-4.500-5 4.500z" fill="#b4f8b4" stroke="#008000" strokeWidth="1.200" />

      <polyline points={macdLine} stroke="#000" />
      <polyline points={signalLine} stroke="#0000e0" />
      <polyline points={leaderLine} stroke="#f00000" strokeWidth="2" strokeLinejoin="round" />
      <path d="M757 678L813 688.500" stroke="#0000d0" strokeWidth="2" />

      <g fill="#202020">
        {priceRows.slice(1).filter((r) => r.label !== "11.50").map((r) => (
          <text key={r.label} x="1201" y={r.y + 3}>{r.label}</text>
        ))}
        {macdRows.map((r) => <text key={r.label} x="1200" y={r.y + 3}>{r.label}</text>)}
      </g>
      <PriceTag y={520} label="11.46" fill="#000" />
      <PriceTag y={780} label="-0.36" fill="#000" />
      <PriceTag y={761} label="-0.24" fill="#ff0000" />
      <PriceTag y={771} label="-0.30" fill="#0000ff" />

      <g className="font-['DejaVu_Sans',sans-serif]">
        <text x="194" y="636" fill="#e00000">Leader of the MACD</text>
        <text x="194" y="648" fill="#000">MACD</text>
        <text x="194" y="660" fill="#0000e0">Signal Line of MACD</text>
      </g>
      {dates.map(([x, label]) => (
        <text key={label} x={x} y="884" fill="#fff" textAnchor="middle">{label}</text>
      ))}

      <rect x="191.500" y="129.500" width="98" height="18" fill="#fff" stroke="#000" shapeRendering="crispEdges" />
      <text x="195" y="142" fill="#000" className="font-['DejaVu_Sans',sans-serif] text-[12px]">SB_0_I0B Daily</text>

      <path
        d="M909.500 206.500L973.500 222V214a11 11 0 0111-11.500h169a11 11 0 0111 11v41a11 11 0 01-11 11h-169a11 11 0 01-11-11V243z"
        fill="#fef1e4"
        stroke="#1c1c1c"
      />
      <g className="text-[15px] font-bold" fill="#1a1a1a" textAnchor="middle">
        <text x="1068.500" y="230">Complex divergence</text>
        <text x="1068.500" y="248">(bearish)</text>
      </g>
    </svg>
  );
}

const tabs: [string, string][] = [
  ["Strategy Summary", "w-[94px]"], ["Editor", "w-10"], ["0 Alerts", "w-[47px]"], ["Performance", "w-[71px]"],
  ["Trades", "w-[43px]"], ["Equity Curve", "w-[71px]"], ["Drawdown", "w-[62px]"], ["Profit Distribution", "w-[88px]"],
];

function StatusCell({ children, className = "" }: { children: ReactNode; className?: string }) {
  return (
    <span className={`flex h-4 shrink-0 items-center border-r border-[#aca899] pl-[5px] whitespace-nowrap ${className}`}>{children}</span>
  );
}

const strip = "flex items-center border-t border-[#8e8b7c] bg-linear-to-b from-[#dedaca] via-[#ece9d8] via-20% to-[#e4e0cf]";

function Workspace() {
  return (
    <main className="flex min-w-0 grow flex-col">
      <div className="mt-px flex grow flex-col border-t border-l border-[#716f64] pr-px">
        <div className="flex h-5 items-end gap-px font-[Roboto,sans-serif]" role="tablist">
          <button role="tab" aria-selected="true" className="-mb-px h-[21px] w-11 rounded-t-[2px] border-t-[3px] border-[#ffb72c] bg-[#fcfcfe] pr-1 pb-[3px]">
            Chart
          </button>
          {tabs.map(([name, width]) => (
            <button
              key={name}
              role="tab"
              className={`h-[18px] shrink-0 rounded-t-[3px] border border-b-0 border-[#91a7b4] bg-linear-to-b from-white to-[#ecebe3] whitespace-nowrap ${width}`}
            >
              {name}
            </button>
          ))}
        </div>
        <div className="border border-[#919b9c] bg-linear-to-b from-[#fcfcfe] to-[#f4f3ee] pt-1 pr-[3px] pb-[5px] pl-[5px]">
          <Chart />
          <div className="flex h-[17px] items-center justify-between bg-linear-to-b from-[#f3f1ec] to-[#fefefb]">
            <ScrollButton dir="left" label="Earlier bars" />
            <span className="ml-auto h-4 w-[6px] rounded-[2px] border border-[#9db5e8] bg-[#c6d6fc]" />
            <ScrollButton dir="right" label="Later bars" />
          </div>
          <div className={`mt-[3px] h-[21px] ${strip}`}>
            <span className="w-[130px] border-r border-[#aca899] pl-[3px] leading-4">Bar:</span>
            {[1, 2, 3, 4, 5, 6].map((n) => <span key={n} className="h-4 w-[130px] border-r border-[#aca899]" />)}
            <span className="pl-[3px]">Mouse:</span>
          </div>
        </div>
        <div className={`mt-[2px] h-6 ${strip}`}>
          <StatusCell className="w-[126px] text-[#0000ff]"><a href="#monitor">Add to Strategy Monitor</a></StatusCell>
          <StatusCell className="w-[120px]">Net Profit: $13,078.40</StatusCell>
          <StatusCell className="w-[138px]">BH Net Profit: ($8,139.20)</StatusCell>
          <StatusCell className="w-[137px] font-bold text-[#008000]">Profit per Bar: $217.97</StatusCell>
          <StatusCell className="w-[134px] text-[#ff0000]">BH Profit per Bar: ($2.45)</StatusCell>
          <StatusCell className="w-[107px]">Last Date: 5/8/2008</StatusCell>
          <span className="pl-[3px] whitespace-nowrap">Bars: 3,329</span>
          <span className="ml-auto flex items-center gap-[6px] whitespace-nowrap">
            <Icon>
              <g stroke="#34347c" strokeWidth="1.200">
                <path d="M8 8l4-6 3 0 0 3-5 5-3 0z" fill="#b4b4e4" />
                <path d="M8 8L6 8l-5 5 1 2 3 0 5-5z" fill="#b4b4e4" />
                <path d="M5 11l6-6" stroke="#fff" />
                <path d="M5 4l3 1M12 12l-2-3" />
              </g>
            </Icon>
            <span className="flex items-center gap-[2px]">
              <Icon>
                <circle cx="8" cy="8" r="7.500" fill="#2c3d5c" />
                <path d="M3 8h9M8 4l4 4-4 4" stroke="#fff" strokeWidth="2" />
              </Icon>
              Streaming
            </span>
            <Grip />
          </span>
        </div>
      </div>
    </main>
  );
}

/* ---------- drawing tools ---------- */

const Fib = ({ children }: { children: ReactNode }) => (
  <Icon>
    {children}
    <g stroke="#0000f0" shapeRendering="crispEdges">
      <path d="M3.500 15v-5M3 10.500h3M3 12.500h3M8.500 10v5M11.500 10v5M11 10.500h2M11 12.500h2M11 14.500h2M13.500 11v1M13.500 13v1" />
    </g>
  </Icon>
);

const drawTools: [string, ReactNode][][] = [
  [["Eraser", <EraserIcon />]],
  [
    ["Image", <Icon><path d="M1 1.500h14v13H1z" fill="#9ccaf4" stroke="#000" /><circle cx="11" cy="4.500" r="2" fill="#ffee00" /><path d="M1.500 14L7 7l6 7z" fill="#3c9c14" /><path d="M11 8l3-2v8h-2z" fill="#6a3c14" /></Icon>],
    ["Callout", <Icon><path d="M2 3h11l2 3-2 3H8l-4 5 1-5H3L1 6z" fill="#ffe800" stroke="#a04a00" /></Icon>],
    ["Note", <Icon><path d="M1 1h9l5 5v9H1z" fill="#ffff00" stroke="#6a2a00" /><path d="M10 1v5h5" fill="#e0c000" stroke="#6a2a00" /></Icon>],
  ],
  [
    ["Horizontal line", <Icon><path d="M0 8h16" stroke="#008000" strokeWidth="2" /></Icon>],
    ["Vertical line", <Icon><path d="M8 0v16" stroke="#008000" strokeWidth="2" /></Icon>],
    ["Trade line", <Icon><path d="M2 4l11 9" stroke="#e05030" strokeWidth="2" /><path d="M.5 2.500h3v3h-3zM12.500 11.500h3v3h-3z" stroke="#000" /><path d="M10 0h3v2h2l-3.500 4L8 2h2z" fill="#f00" /><path d="M3 16h3v-3h2L4.500 9 1 13h2z" fill="#00f" /></Icon>],
    ["Trend line", <Icon><path d="M2 3l11 10" stroke="#e05030" strokeWidth="2" /><path d="M.5 1.500h3v3h-3zM12.500 11.500h3v3h-3z" stroke="#000" /></Icon>],
  ],
  [
    ["Diamond", <Icon><path d="M8 1l7 7-7 7-7-7z" stroke="#008000" strokeWidth="2" /></Icon>],
    ["Ellipse", <Icon><circle cx="8" cy="8" r="6" stroke="#008000" strokeWidth="2" /></Icon>],
    ["Rectangle", <Icon><path d="M2 2h12v12H2z" stroke="#008000" strokeWidth="2" /></Icon>],
    ["Triangle", <Icon><path d="M2 11l6-7 6 7z" stroke="#008000" strokeWidth="2" /></Icon>],
  ],
  [
    ["Fibonacci arcs", <Fib><path d="M1 8a7 7 0 0114 0M4 8a4 4 0 018 0M6.500 8a1.500 1.500 0 013 0" stroke="#108030" /></Fib>],
    ["Fibonacci fan", <Fib><path d="M1 1l12 2M1 1l12 5M1 1l9 8M1 1l3 7" stroke="#108030" /></Fib>],
    ["Fibonacci retracement", <Fib><path d="M5 1.500h10M5 4.500h10M6 7.500h9" stroke="#108030" /><path d="M1 1l4 7" stroke="#603080" /></Fib>],
    ["Fibonacci time", <Fib><path d="M2.500 0v8M7.500 0v8M11.500 0v8M14.500 0v8" stroke="#901050" /><path d="M4.500 0v8" stroke="#901050" strokeWidth="2" /></Fib>],
    ["Gann fan", <Icon><path d="M2 2l12 3M2 2l11 10M2 2l4 12M2 7V2h5" stroke="#e04010" strokeWidth="1.300" /></Icon>],
    ["Channel", <Icon><path d="M0 11l16-5" stroke="#008000" strokeWidth="2" /><path d="M0 7l16-5M0 14l16-4" stroke="#000080" strokeDasharray="1 1.500" /></Icon>],
    ["Speed lines", <Icon><path d="M1 14L14 1M1 14l13-8M1 14l11-3M1 14v-4M1 14h5" stroke="#108030" strokeWidth="1.200" /></Icon>],
  ],
];

function DrawingBar() {
  return (
    <div className="flex w-6 shrink-0 flex-col border-r border-[#2a5cbc] bg-linear-to-r from-[#dfebfe] to-[#84abe6]">
      {drawTools.map((group, g) => (
        <div key={g} className="flex flex-col">
          {group.map(([name, icon]) => (
            <button key={name} aria-label={name} className="flex h-[23px] items-center pl-[2px]">{icon}</button>
          ))}
          <span className={`mx-[2px] mt-[3px] border-t border-b border-t-[#6a8ccb] border-b-white ${g === 0 ? "mb-[7px]" : "mb-px"}`} />
        </div>
      ))}
    </div>
  );
}

export default function App() {
  return (
    <div className="flex min-h-screen flex-col bg-[#ece9d8] font-['DejaVu_Sans_Condensed','DejaVu_Sans',sans-serif] text-[11px] leading-[14px] text-black">
      <TitleBar />
      <MenuBar />
      <MainToolbar />
      <ChartToolbar />
      <div className="flex grow">
        <Sidebar />
        <div className="w-[6px] shrink-0 border-r border-[#8e8b7c] bg-[#aca899]" />
        <Workspace />
        <div className="w-1 shrink-0 border-r-2 border-white" />
        <DrawingBar />
      </div>
      <footer className={`h-[22px] pl-[2px] text-[#0000ff] ${strip}`}>
        <StatusCell className="w-[59px] border-l">Orders: 0</StatusCell>
        <StatusCell className="w-[90px]">Active Orders: 0</StatusCell>
        <span className="ml-auto pr-px"><Grip /></span>
      </footer>
      <div className="h-1 bg-[#2f7ae5]" />
    </div>
  );
}
